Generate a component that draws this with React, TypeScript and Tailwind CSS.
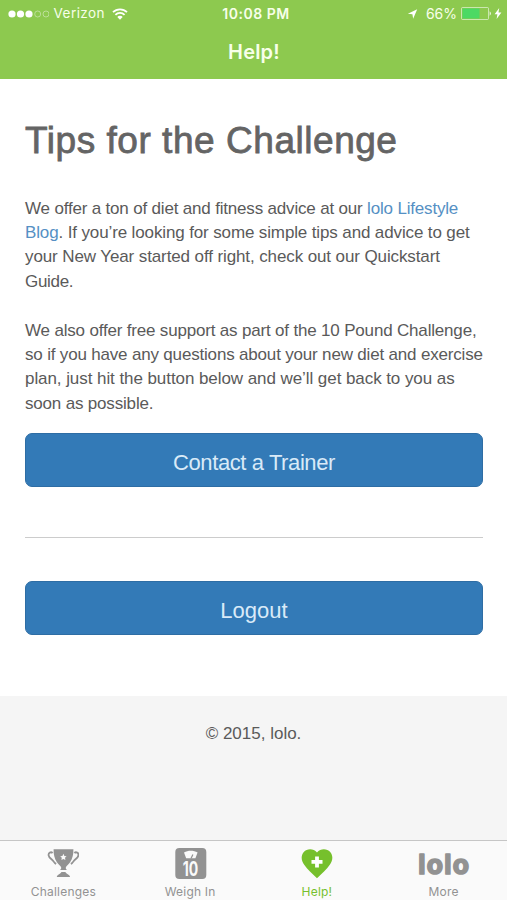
import type { ReactNode } from 'react';

interface TabProps {
  label: string;
  active?: boolean;
  children: ReactNode;
}

function StatusBar() {
  return (
    <div className="grid h-[27px] grid-cols-3 items-center pr-[5px] pl-[8px] text-[13.5px]">
      <div className="flex items-center">
        <svg className="mr-[4px] h-[8px] w-[41px]" viewBox="0 0 41 8" fill="white">
          <circle cx="4" cy="4" r="3.6" />
          <circle cx="12.5" cy="4" r="3.6" />
          <circle cx="21" cy="4" r="3.6" />
          <circle cx="29.7" cy="4" r="3" fill="none" stroke="white" strokeOpacity="0.5" strokeWidth="0.8" />
          <circle cx="38" cy="4" r="3" fill="none" stroke="white" strokeOpacity="0.5" strokeWidth="0.8" />
        </svg>
        <span className="pl-[0.5px] tracking-[0.45px]">Verizon</span>
        <svg className="ml-[7px] h-[12px] w-[16px]" viewBox="0 0 16 12" fill="none" stroke="white" strokeWidth="1.8">
          <path d="M1 4.2a10 10 0 0 1 14 0" />
          <path d="M3.4 6.9a6.4 6.4 0 0 1 9.2 0" />
          <path d="M5.3 8.9a3.7 3.7 0 0 1 5.4 0L8 11.7z" fill="white" stroke="none" />
        </svg>
      </div>
      <div className="pl-[2px] text-center text-[14px] font-semibold tracking-[0.5px]">10:08 PM</div>
      <div className="flex items-center justify-end">
        <svg className="mr-[8px] h-[10px] w-[11px]" viewBox="0 0 11 11" fill="white">
          <path d="M10.7 0.4 6.2 10.6 5.4 5.7 0.4 5.1z" />
        </svg>
        <span className="text-[14px]">66%</span>
        <svg className="ml-[4px] h-[13px] w-[31px]" viewBox="0 0 31 13">
          <rect x="0.5" y="0.5" width="27" height="12" rx="1" fill="none" stroke="white" strokeOpacity="0.55" />
          <rect x="1.5" y="1.5" width="17" height="10" fill="#4cd964" />
          <path d="M28.6 4.2a2.6 2.6 0 0 1 0 4.6z" fill="white" fillOpacity="0.8" />
        </svg>
        <svg className="ml-[2px] h-[11px] w-[8px]" viewBox="0 0 8 11" fill="white">
          <path d="M5.2 0 0.6 6.2H3.4L2.6 11 7.4 4.6H4.5z" />
        </svg>
      </div>
    </div>
  );
}

function ActionButton({ children }: { children: ReactNode }) {
  return (
    <button className="block h-[54px] w-full rounded-[7px] border border-[#2e6da4] bg-[#337ab7] pt-[4px] text-[22px] leading-[50px] text-[#d9eaf8]">
      {children}
    </button>
  );
}

function Tab({ label, active, children }: TabProps) {
  return (
    <div className={`flex flex-1 flex-col items-center pt-[6px] ${active ? 'text-[#76c02c]' : 'text-[#929292]'}`}>
      <div className="flex h-[34px] items-center justify-center">{children}</div>
      <span className="mt-[3px] text-[12px] leading-[16px] tracking-[0.2px]">{label}</span>
    </div>
  );
}

export default function App() {
  return (
    <div className="flex h-[900px] w-[507px] flex-col overflow-hidden bg-white font-['Inter',sans-serif]">
      <header className="h-[79px] bg-[#8dc94f] text-[#f7ffe9]">
        <StatusBar />
        <h1 className="pt-[10px] pl-px text-center text-[20px] leading-[30px] font-semibold tracking-[0.2px]">Help!</h1>
      </header>

      <main className="h-[617px] pr-[24px] pl-[25px] font-['Liberation_Sans',Arial,sans-serif] text-[#5a5a5a]">
        <h2 className="pt-[38px] text-[37px] leading-[48px] tracking-[0.54px] whitespace-nowrap text-[#646464] [-webkit-text-stroke:0.8px_#646464]">
          Tips for the Challenge
        </h2>
        <div className="mt-[31.5px] text-[17px] leading-[24.4px] whitespace-nowrap">
          <p>
            <span className="block tracking-[-0.18px]">We offer a ton of diet and fitness advice at our <a className="text-[#5590c4]">lolo Lifestyle</a></span>
            <span className="block tracking-[-0.13px]"><a className="text-[#5590c4]">Blog</a>. If you’re looking for some simple tips and advice to get</span>
            <span className="block tracking-[-0.11px]">your New Year started off right, check out our Quickstart</span>
            <span className="block tracking-[-0.3px]">Guide.</span>
          </p>
          <p className="mt-[24.4px]">
            <span className="block tracking-[-0.18px]">We also offer free support as part of the 10 Pound Challenge,</span>
            <span className="block tracking-[-0.18px]">so if you have any questions about your new diet and exercise</span>
            <span className="block tracking-[-0.07px]">plan, just hit the button below and we’ll get back to you as</span>
            <span className="block tracking-[-0.18px]">soon as possible.</span>
          </p>
        </div>
        <div className="mt-[16.5px]">
          <ActionButton>
            <span className="tracking-[-0.4px]">Contact a Trainer</span>
          </ActionButton>
        </div>
        <hr className="mt-[50px] mb-[43px] border-t border-[#cccccc]" />
        <ActionButton>Logout</ActionButton>
      </main>

      <footer className="h-[144px] bg-[#f5f5f5] pt-[26px] text-center font-['Liberation_Sans',Arial,sans-serif] text-[17px] leading-[24px] text-[#5a5a5a]">
        © 2015, lolo.
      </footer>

      <nav className="flex h-[60px] border-t border-[#c6c6c6] bg-[#fafafa]">
        <Tab label="Challenges">
          <svg className="h-[30px] w-[32px]" viewBox="0 0 32 30" fill="currentColor">
            <path d="M6.6 0.2h19.8c.2 5-1 9.600-3.300 13-1.300 1.900-3 3-4 4.500-.7 1.200-.3 2.300.9 3.200h-7c1.200-.9 1.600-2 .9-3.200-1-1.500-2.700-2.600-4-4.500-2.300-3.400-3.500-8-3.300-13z" />
            <path d="M9.800 28c.3-2.400 3.200-2.500 4.700-5h3.800c1.500 2.500 4.500 2.600 4.800 5z" />
            <path d="M5.600 4C4 2.500 1.200 3.600 1.600 6.300c.5 3 3.200 3.500 4.600 5.600.8 1.300 1.400 2.400 3 3M27.400 4c1.600-1.500 4.400-.4 4 2.300-.5 3-3.200 3.500-4.600 5.600-.8 1.300-1.400 2.400-3 3" fill="none" stroke="currentColor" strokeWidth="1.8" />
            <path d="m16.400 4.800 1 2.100 2.200.3-1.600 1.600.4 2.200-2-1.100-2 1.100.4-2.200-1.600-1.600 2.200-.3z" fill="#fafafa" />
          </svg>
        </Tab>
        <Tab label="Weigh In">
          <svg className="ml-[2px] h-[32px] w-[32px]" viewBox="0 0 32 32">
            <rect x="0.3" y="0" width="31" height="31" rx="4" fill="currentColor" />
            <path d="M9 4.4c4-2.300 9.600-2.300 13.600 0l-2.200 5.800H11.200z" fill="#fafafa" />
            <path d="m16 10.400 1.900-4" stroke="currentColor" strokeWidth="1.2" />
            <text x="7.8" y="27.7" textLength="15.5" lengthAdjust="spacingAndGlyphs" fill="#fafafa" fontSize="19.5" fontWeight="700">10</text>
          </svg>
        </Tab>
        <Tab label="Help!" active>
          <svg className="h-[30px] w-[32px]" viewBox="0 0 32 30" fill="currentColor">
            <path d="M16 3.6C19.5-.8 26-.6 29.2 3c3 3.5 2.8 8.5-.4 12.8C25.5 20.4 21 24.6 16 29.3 11 24.6 6.5 20.4 3.2 15.8 0 11.5-.2 6.5 2.8 3 6-.6 12.5-.8 16 3.6z" />
            <path d="M16 7.4v11M10.5 12.9h11" stroke="white" strokeWidth="3.8" />
          </svg>
        </Tab>
        <Tab label="More">
          <svg className="h-[32px] w-[52px] overflow-visible" viewBox="0 0 52 32">
            <text x="0.3 8.7 26.3 34.7" y="26" fill="currentColor" stroke="currentColor" strokeWidth="1.7" strokeLinejoin="round" fontSize="26.5" fontWeight="700">lolo</text>
          </svg>
        </Tab>
      </nav>
    </div>
  );
}
